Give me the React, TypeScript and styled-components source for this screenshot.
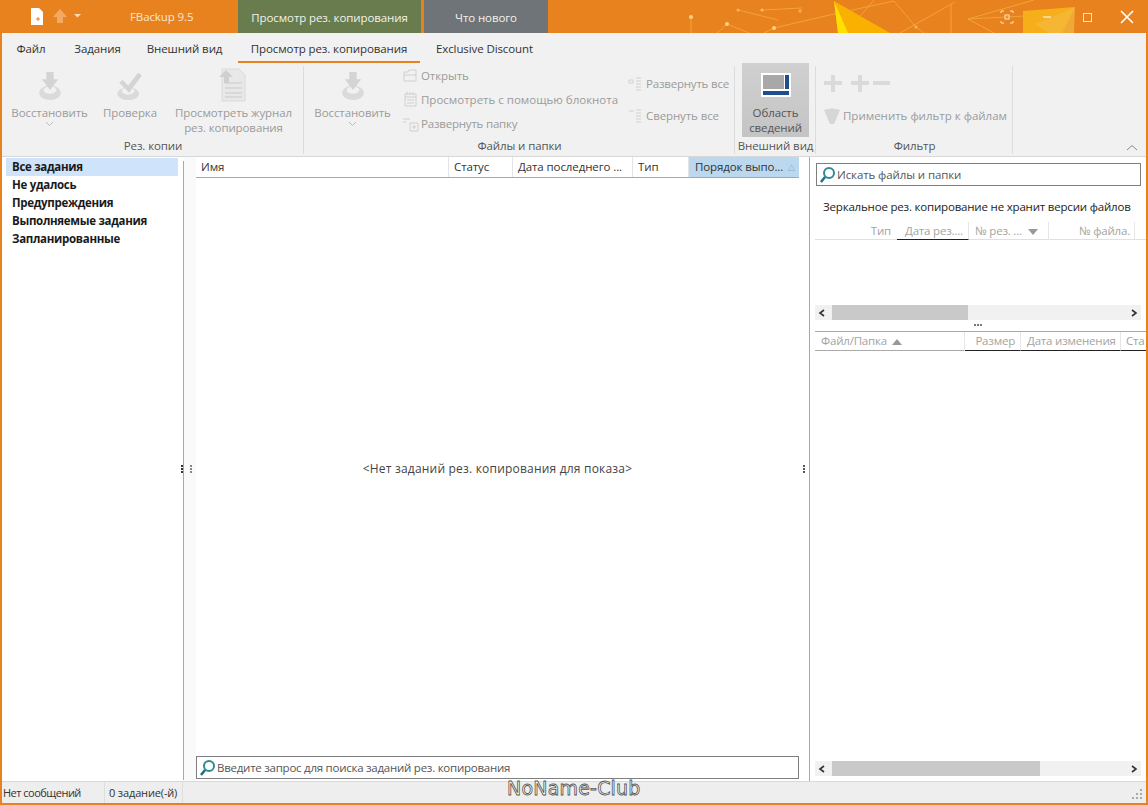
import React from "react";
import styled, { createGlobalStyle } from "styled-components";

const Global = createGlobalStyle`
  html, body { margin: 0; padding: 0; background: #fff; }
  body { font-family: "Open Sans", "Noto Sans", sans-serif; font-size: 12px; color: #222; overflow: hidden; }
  * { box-sizing: border-box; }
`;

const Win = styled.div`
  position: relative; width: 1148px; height: 805px; background: #e8821e;
  display: flex; flex-direction: column; padding: 0 2px 2px; overflow: hidden;
`;
const TitleBar = styled.div`
  position: relative; height: 33px; margin: 0 -2px; display: flex; align-items: stretch; flex: none; padding-left: 30px;
`;
const Qat = styled.div`display: flex; align-items: center; gap: 9px; width: 44px; margin-top: -1px; flex: none;`;
const QatDrop = styled.svg`align-self: center; flex: none; margin-right: 6px; margin-top: -1px;`;
const Title = styled.div`
  color: #fbe6cc; width: 148px; padding-left: 42px; white-space: nowrap; line-height: 34px; font-size: 11.5px; letter-spacing: -.1px; flex: none;
`;
const CtxTab = styled.div<{ $bg: string; $w: number; $ml: number }>`
  width: ${p => p.$w}px; background: ${p => p.$bg}; color: #f2f2ea; text-align: center; line-height: 35px; margin-left: ${p => p.$ml}px; white-space: nowrap; font-size: 11.5px; letter-spacing: -.1px; flex: none;
`;
const Deco = styled.svg`position: absolute; right: 0; top: 0; width: 574px; height: 33px;`;
const WinBtns = styled.svg`position: absolute; right: 0; top: 0; width: 160px; height: 33px;`;

const Tabs = styled.div`height: 30px; background: #f1f1f1; display: flex; flex: none; padding-left: 3px;`;
const TabItem = styled.div<{ $on?: boolean; $w: number; $ml?: number }>`
  width: ${p => p.$w}px; margin-left: ${p => p.$ml || 0}px; text-align: center; white-space: nowrap; font-size: 11.5px; letter-spacing: -.1px; color: #333; line-height: 31px; flex: none;
  border-bottom: 2px solid ${p => p.$on ? "#e8821e" : "transparent"}; height: 30px;
`;

const Ribbon = styled.div`height: 94px; background: #f1f1f1; display: flex; flex: none; border-bottom: 1px solid #d8d8d8; position: relative;`;
const Group = styled.div<{ $w: number }>`
  width: ${p => p.$w}px; flex: none; position: relative; display: flex; flex-direction: column; padding-bottom: 2px; height: 93px;
  &::after { content: ""; position: absolute; right: 0; top: 3px; bottom: 2px; width: 1px; background: #dcdcdc; }
`;
const GroupBody = styled.div<{ $pl?: number }>`flex: 1; display: flex; min-height: 0; padding-left: ${p => p.$pl || 0}px;`;
const FilterBody = styled.div`flex: 1; display: flex; flex-direction: column; padding: 10px 0 0 7px;`;
const GroupName = styled.div`text-align: center; color: #555; font-size: 11.5px; line-height: 17px; height: 17px; letter-spacing: -.1px; white-space: nowrap;`;
const Big = styled.div<{ $w: number; $active?: boolean; $ml?: number }>`
  width: ${p => p.$w}px; margin-left: ${p => p.$ml || 0}px; flex: none; display: flex; flex-direction: column; align-items: center; text-align: center;
  color: ${p => p.$active ? "#555" : "#9b9b9b"}; font-size: 11.5px; letter-spacing: -.1px; line-height: 15px; padding-top: ${p => p.$active ? 10 : 8}px; height: 74px;
  ${p => p.$active ? "background: linear-gradient(#d0d0d0, #c4c4c4 ); " : ""}
  svg { flex: none; margin-bottom: ${p => p.$active ? 8 : 4}px; }
`;
const LogSvg = styled.svg`
  && { margin: -4px 0 2px; }
`;
const Chevron = styled.svg`margin-top: 1px;`;
const SmallCol = styled.div<{ $w: number; $pt: number; $gap: number; $ml?: number }>`
  width: ${p => p.$w}px; margin-left: ${p => p.$ml || 0}px; flex: none; display: flex; flex-direction: column; padding-top: ${p => p.$pt}px; gap: ${p => p.$gap}px;
`;
const Small = styled.div<{ $mt?: number; $ls?: number }>`
  display: flex; align-items: center; gap: 2px; color: #9b9b9b; font-size: 11.5px; letter-spacing: ${p => p.$ls ?? -0.1}px; height: 17px; white-space: nowrap; margin-top: ${p => p.$mt || 0}px;
`;
const SmSvg = styled.svg`flex: none;`;
const PlusMinus = styled.svg`flex: none; margin-left: 1px;`;
const Collapse = styled.svg`position: absolute; right: 8px; bottom: 5px;`;

const Main = styled.div`flex: 1; background: #fff; display: flex; min-height: 0;`;
const Side = styled.div`
  width: 182px; flex: none; padding: 1px 4px 0 4px; position: relative;
  &::after { content: ""; position: absolute; right: 0; top: 4px; bottom: 1px; width: 1px; background: #a9a9a9; }
`;
const SideItem = styled.div<{ $on?: boolean }>`
  height: 18px; line-height: 18px; font-weight: 700; font-size: 11.5px; color: #1a1a1a; padding-left: 6px; width: 172px; letter-spacing: -.3px;
  background: ${p => p.$on ? "#cfe3fb" : "transparent"};
`;
const Center = styled.div`
  width: 626px; flex: none; display: flex; flex-direction: column; padding: 0 10px 2px 12px; border-right: 1px solid #a9a9a9; position: relative;
  background: linear-gradient(90deg, #fafafa 12px, #fff 12px);
`;
const Head = styled.div`display: flex; height: 21px; border-bottom: 1px solid #a9a9a9; flex: none;`;
const HeadCell = styled.div<{ $w: number; $on?: boolean; $pl?: number }>`
  width: ${p => p.$w}px; flex: none; padding-left: ${p => p.$pl ?? 5}px; line-height: 20px; font-size: 11.5px; letter-spacing: -.1px; color: #333; white-space: nowrap; position: relative;
  border-right: 1px solid ${p => p.$on ? "transparent" : "#e4e4e4"};
  background: ${p => p.$on ? "#bcd8ee" : "transparent"};
`;
const SortTri = styled.span`position: absolute; right: 3px; top: 0; color: #8ab0cf; font-size: 9px;`;
const Empty = styled.div`flex: 1; display: flex; align-items: center; justify-content: center; color: #444; font-size: 12px; letter-spacing: .2px; white-space: nowrap; padding-top: 2px; background: #fff;`;
const SearchBox = styled.div<{ $ls: number; $ml?: number }>`
  height: 23px; margin-left: ${p => p.$ml || 0}px; border: 1px solid #7f7f7f; background: #fff; display: flex; align-items: center; gap: 1px; padding-left: 2px; color: #555; font-size: 11.5px; flex: none; letter-spacing: ${p => p.$ls}px;
`;
const Dots = styled.div<{ $l: number; $c: string }>`
  position: absolute; left: ${p => p.$l}px; top: 308px; display: flex; flex-direction: column; gap: 1px;
  i { width: 2px; height: 2px; background: ${p => p.$c}; display: block; }
`;
const Right = styled.div`flex: 1; display: flex; flex-direction: column; padding: 6px 5px 5px 5px; min-width: 0; overflow: hidden;`;
const Note = styled.div`margin: 12px 0 0 8px; height: 17px; line-height: 17px; font-size: 11.5px; color: #222; white-space: nowrap; letter-spacing: -.19px;`;
const RHead = styled.div<{ $top: number; $c: string; $first?: boolean }>`
  display: flex; height: ${p => p.$first ? 18 : 20}px; margin-top: ${p => p.$top}px; box-shadow: inset 0 -1px 0 ${p => p.$c}; flex: none; overflow: hidden; margin-right: -5px;
  ${p => p.$first ? "" : `border-top: 1px solid ${p.$c};`}
`;
const RCell = styled.div<{ $w: number; $al?: string; $dark?: boolean; $nb?: boolean; $pad?: number; $pr?: number }>`
  width: ${p => p.$w}px; flex: none; text-align: ${p => p.$al || "left"}; color: #a3a3a3; font-size: 11.5px; line-height: 17px; padding: 0 ${p => p.$pr ?? 5}px 0 ${p => p.$pad ?? 5}px; white-space: nowrap; letter-spacing: -.2px;
  border-right: 1px solid ${p => p.$nb ? "transparent" : "#e6e6e6"}; position: relative; height: 100%;
  ${p => p.$dark ? "border-bottom: 1px solid #222;" : ""}
`;
const TriSvg = styled.svg<{ $ml: number }>`margin-left: ${p => p.$ml}px;`;
const Scroll = styled.div<{ $top: number; $thumb: number }>`
  height: 15px; margin-top: ${p => p.$top}px; background: #f1f1f1; position: relative; flex: none;
  &::before { content: ""; position: absolute; left: 17px; top: 0; bottom: 0; width: ${p => p.$thumb}px; background: #c9c9c9; }
`;
const ScrollArrow = styled.svg<{ $side: string }>`position: absolute; top: 4px; ${p => p.$side}: 3px;`;
const Ellipsis = styled.div`height: 11px; display: flex; justify-content: center; align-items: center; gap: 1px; padding-bottom: 2px;
  i { width: 2px; height: 2px; background: #777; display: block; }
`;
const Filler = styled.div`flex: 1;`;
const Status = styled.div`height: 22px; background: #eee; border-top: 1px solid #d9d9d9; display: flex; flex: none; position: relative;`;
const StatusCell = styled.div<{ $w: number; $pl: number; $ls: number }>`
  width: ${p => p.$w}px; flex: none; border-right: 1px solid #dedede; padding-left: ${p => p.$pl}px; line-height: 21px; font-size: 11px; color: #333; letter-spacing: ${p => p.$ls}px; white-space: nowrap;
`;
const Grip = styled.svg`position: absolute; right: 3px; bottom: 3px;`;
const Mark = styled.div`
  position: absolute; left: 507px; top: 776px; font-family: "DejaVu Sans", sans-serif; font-size: 19px; line-height: 24px; letter-spacing: .2px; color: #fff;
  -webkit-text-stroke: .8px #555; white-space: nowrap;
`;

const grey = "#d4d4d4";
const Restore = () => (
  <svg width="34" height="30" viewBox="0 0 34 33">
    <ellipse cx="17" cy="24" rx="12" ry="8" fill="#dadada" />
    <ellipse cx="17" cy="21" rx="7" ry="4" fill="#f1f1f1" />
    <path d="M13 1h8v8h5l-9 12L8 9h5z" fill={grey} />
  </svg>
);
const Verify = () => (
  <svg width="34" height="30" viewBox="0 0 34 33">
    <ellipse cx="15" cy="25" rx="12" ry="7" fill="#dadada" />
    <ellipse cx="15" cy="22" rx="7" ry="4" fill="#f1f1f1" />
    <path d="M5 13l4-3 6 6L26 2l4 3-14 19z" fill={grey} />
  </svg>
);
const Log = () => (
  <LogSvg width="34" height="36" viewBox="0 0 34 36">
    <path d="M5 2h17l6 6v26H5z" fill="#e8e8e8" stroke="#dadada" />
    <path d="M8 16h17M8 21h17M8 26h17M8 30h17" stroke="#c9c9c9" />
    <path d="M9 3l7 7h-4v6H7v-6H2z" fill="#cfcfcf" />
  </LogSvg>
);
const Chev = () => (
  <Chevron width="9" height="6" viewBox="0 0 9 6"><path d="M1 1l3.500 3.500L8 1" fill="none" stroke="#bbb" /></Chevron>
);
const Pane = () => (
  <svg width="30" height="24" viewBox="0 0 30 24">
    <rect width="30" height="24" fill="#fff" />
    <rect x="2" y="2" width="21" height="14" fill="#a8a8a8" />
    <rect x="24" y="2" width="4" height="14" fill="#1f4e8c" />
    <rect x="2" y="18" width="26" height="4" fill="#1f4e8c" />
  </svg>
);
const Mag = () => (
  <SmSvg width="17" height="17" viewBox="0 0 17 17">
    <circle cx="10" cy="7" r="5" fill="#fff" stroke="#2f8a97" strokeWidth="2" />
    <path d="M6 11l-4 5" stroke="#1d6f86" strokeWidth="2.500" />
  </SmSvg>
);
const SmIcon = ({ d }: { d: string }) => (
  <SmSvg width="17" height="17" viewBox="0 0 17 17">
    <path d={d} fill="none" stroke="#d0d0d0" />
  </SmSvg>
);
const Arrows = () => (
  <>
    <ScrollArrow $side="left" width="8" height="8" viewBox="0 0 8 8"><path d="M6 1L2 4l4 3" fill="none" stroke="#333" strokeWidth="1.600" /></ScrollArrow>
    <ScrollArrow $side="right" width="8" height="8" viewBox="0 0 8 8"><path d="M2 1l4 3-4 3" fill="none" stroke="#333" strokeWidth="1.600" /></ScrollArrow>
  </>
);

export default function App() {
  return (
    <Win>
      <Global />
      <TitleBar>
        <Qat>
          <svg width="13" height="17" viewBox="0 0 13 17"><path d="M1 0h8l4 4v13H1z" fill="#fff" /><path d="M6 11h4M8 9v4" stroke="#e8821e" /></svg>
          <svg width="16" height="16" viewBox="0 0 16 16"><path d="M8 1l7 8h-4v6H5V9H1z" fill="#f3a863" /></svg>
        </Qat>
        <QatDrop width="8" height="4" viewBox="0 0 8 4"><path d="M0 0h7L3.500 3.500z" fill="#fbdcb8" /></QatDrop>
        <Title>FBackup 9.5</Title>
        <CtxTab $bg="#687c4e" $w={183} $ml={2}>Просмотр рез. копирования</CtxTab>
        <CtxTab $bg="#6f7478" $w={124} $ml={3}>Что нового</CtxTab>
        <Deco viewBox="0 0 574 33">
          <g stroke="#f6a83a" strokeWidth="1" fill="none" opacity=".85">
            <path d="M117 17v16M153 24l-10 9M153 24l22 9M200 28l-10 5M200 28l60-14 60-13M326 33L381 2M320 1l22 26 8 6M377 5v28M394 19l66-19M394 19l26 14M394 19l76-4M300 0l-28 33M164 10l40 10M188 10l40-2" />
          </g>
          <g fill="#ffd27a">
            <circle cx="117" cy="17" r="2" /><circle cx="153" cy="24" r="2" /><circle cx="200" cy="28" r="2" /><circle cx="164" cy="10" r="1.600" opacity=".6" /><circle cx="188" cy="10" r="1.600" opacity=".7" /><circle cx="226" cy="11" r="1.800" opacity=".5" /><circle cx="342" cy="27" r="1.500" opacity=".6" />
          </g>
          <path d="M260 1l4 32h52z" fill="#f9b000" />
          <path d="M260 1l4 32h10z" fill="#ffe000" />
          <path d="M449 11l52-4-13 26h-39z" fill="#f6ae1a" />
          <path d="M501 7l-40 17 14 9h25z" fill="#f4b93f" opacity=".7" />
        </Deco>
        <WinBtns viewBox="0 0 160 33">
          <g stroke="#fbe3c7" fill="none" strokeWidth="1">
            <path d="M13 13v-2h3M22 11h3v2M25 21v2h-3M16 23h-3v-2" />
            <rect x="17" y="15" width="4" height="4" />
            <path d="M55 17h8" strokeWidth="1.500" />
            <rect x="95.500" y="13.500" width="8" height="8" />
            <path d="M133 11l12 12M145 11l-12 12" strokeWidth="1.600" stroke="#fff" />
          </g>
        </WinBtns>
      </TitleBar>
      <Tabs>
        <TabItem $w={52}>Файл</TabItem>
        <TabItem $w={81}>Задания</TabItem>
        <TabItem $w={93}>Внешний вид</TabItem>
        <TabItem $on $w={182} $ml={7}>Просмотр рез. копирования</TabItem>
        <TabItem $w={129}>Exclusive Discount</TabItem>
      </Tabs>
      <Ribbon>
        <Group $w={302}>
          <GroupBody>
            <Big $w={95}><Restore />Восстановить<Chev /></Big>
            <Big $w={66}><Verify />Проверка</Big>
            <Big $w={141}><Log />Просмотреть журнал<br />рез. копирования</Big>
          </GroupBody>
          <GroupName>Рез. копии</GroupName>
        </Group>
        <Group $w={431}>
          <GroupBody>
            <Big $w={97}><Restore />Восстановить<Chev /></Big>
            <SmallCol $w={225} $pt={4} $gap={7} $ml={1}>
              <Small><SmIcon d="M2 5h4l1-2h7v11H2zM2 8h12" />Открыть</Small>
              <Small $ls={0}><SmIcon d="M3 3h11v12H3zM3 6h11M5 1v3M8 1v3M11 1v3M5 9h7M5 12h7" />Просмотреть с помощью блокнота</Small>
              <Small $ls={-0.2}><SmIcon d="M1 4h7M1 7h3M8 8h8v8H8zM12 10v4M10 12h4" />Развернуть папку</Small>
            </SmallCol>
            <SmallCol $w={104} $pt={12} $gap={15}>
              <Small $ls={-0.2}><SmIcon d="M2 5h4v3H2zM9 3h5M9 6h5M9 9h5M9 12h5M9 15h5" />Развернуть все</Small>
              <Small><SmIcon d="M2 4h5M9 3h5M9 6h5M9 9h5M9 12h5M9 15h5" />Свернуть все</Small>
            </SmallCol>
          </GroupBody>
          <GroupName>Файлы и папки</GroupName>
        </Group>
        <Group $w={81}>
          <GroupBody $pl={7}>
            <Big $w={67} $active><Pane />Область<br />сведений</Big>
          </GroupBody>
          <GroupName>Внешний вид</GroupName>
        </Group>
        <Group $w={197}>
          <FilterBody>
            <PlusMinus width="68" height="20" viewBox="0 0 68 20">
              <path d="M0 10h18M9 2v17M27 10h18M36 2v17M49 10h17" stroke="#dadada" strokeWidth="4" fill="none" />
            </PlusMinus>
            <Small $mt={14} $ls={0}>
              <SmSvg width="18" height="18" viewBox="0 0 18 18"><path d="M1 3q8-3 16 0l-6 14H7z" fill="#d6d6d6" /></SmSvg>
              Применить фильтр к файлам
            </Small>
          </FilterBody>
          <GroupName>Фильтр</GroupName>
        </Group>
        <Collapse width="12" height="7" viewBox="0 0 12 7"><path d="M1 6l5-4.500L11 6" fill="none" stroke="#888" /></Collapse>
      </Ribbon>
      <Main>
        <Side>
          <SideItem $on>Все задания</SideItem>
          <SideItem>Не удалось</SideItem>
          <SideItem>Предупреждения</SideItem>
          <SideItem>Выполняемые задания</SideItem>
          <SideItem>Запланированные</SideItem>
          <Dots $l={179} $c="#333"><i /><i /><i /></Dots>
        </Side>
        <Center>
          <Dots $l={6} $c="#888"><i /><i /><i /></Dots>
          <Head>
            <HeadCell $w={253}>Имя</HeadCell>
            <HeadCell $w={64}>Статус</HeadCell>
            <HeadCell $w={120}>Дата последнего ...</HeadCell>
            <HeadCell $w={56}>Тип</HeadCell>
            <HeadCell $w={110} $on $pl={6}>Порядок выпо...<SortTri>△</SortTri></HeadCell>
          </Head>
          <Empty>&lt;Нет заданий рез. копирования для показа&gt;</Empty>
          <SearchBox $ls={-0.25}><Mag />Введите запрос для поиска заданий рез. копирования</SearchBox>
          <Dots $l={619} $c="#555"><i /><i /><i /></Dots>
        </Center>
        <Right>
          <SearchBox $ls={-0.1} $ml={1}><Mag />Искать файлы и папки</SearchBox>
          <Note>Зеркальное рез. копирование не хранит версии файлов</Note>
          <RHead $first $top={7} $c="#e0e0e0">
            <RCell $w={82} $al="right" $nb>Тип</RCell>
            <RCell $w={72} $dark $pad={8} $pr={0}>Дата рез....</RCell>
            <RCell $w={80} $pad={6} $pr={0}>№ рез. ...<TriSvg $ml={6} width="10" height="6" viewBox="0 0 10 6"><path d="M0 0h10L5 6z" fill="#999" /></TriSvg></RCell>
            <RCell $w={86} $al="right" $pr={4}>№ файла.</RCell>
          </RHead>
          <Scroll $top={65} $thumb={136}><Arrows /></Scroll>
          <Ellipsis><i /><i /><i /></Ellipsis>
          <RHead $top={0} $c="#aaa">
            <RCell $w={150} $pad={6}>Файл/Папка<TriSvg $ml={5} width="10" height="6" viewBox="0 0 10 6"><path d="M0 6h10L5 0z" fill="#999" /></TriSvg></RCell>
            <RCell $w={56} $dark $al="right">Размер</RCell>
            <RCell $w={100} $dark $pad={6}>Дата изменения</RCell>
            <RCell $w={30} $dark $nb>Ста</RCell>
          </RHead>
          <Filler />
          <Scroll $top={0} $thumb={208}><Arrows /></Scroll>
        </Right>
      </Main>
      <Status>
        <StatusCell $w={103} $pl={1} $ls={-0.5}>Нет сообщений</StatusCell>
        <StatusCell $w={78} $pl={4} $ls={-0.15}>0 задание(-й)</StatusCell>
        <Grip width="11" height="11" viewBox="0 0 11 11" fill="#aaa"><rect x="8" y="0" width="2" height="2" /><rect x="8" y="4" width="2" height="2" /><rect x="8" y="8" width="2" height="2" /><rect x="4" y="4" width="2" height="2" /><rect x="4" y="8" width="2" height="2" /><rect x="0" y="8" width="2" height="2" /></Grip>
      </Status>
      <Mark>NoName-Club</Mark>
    </Win>
  );
}
